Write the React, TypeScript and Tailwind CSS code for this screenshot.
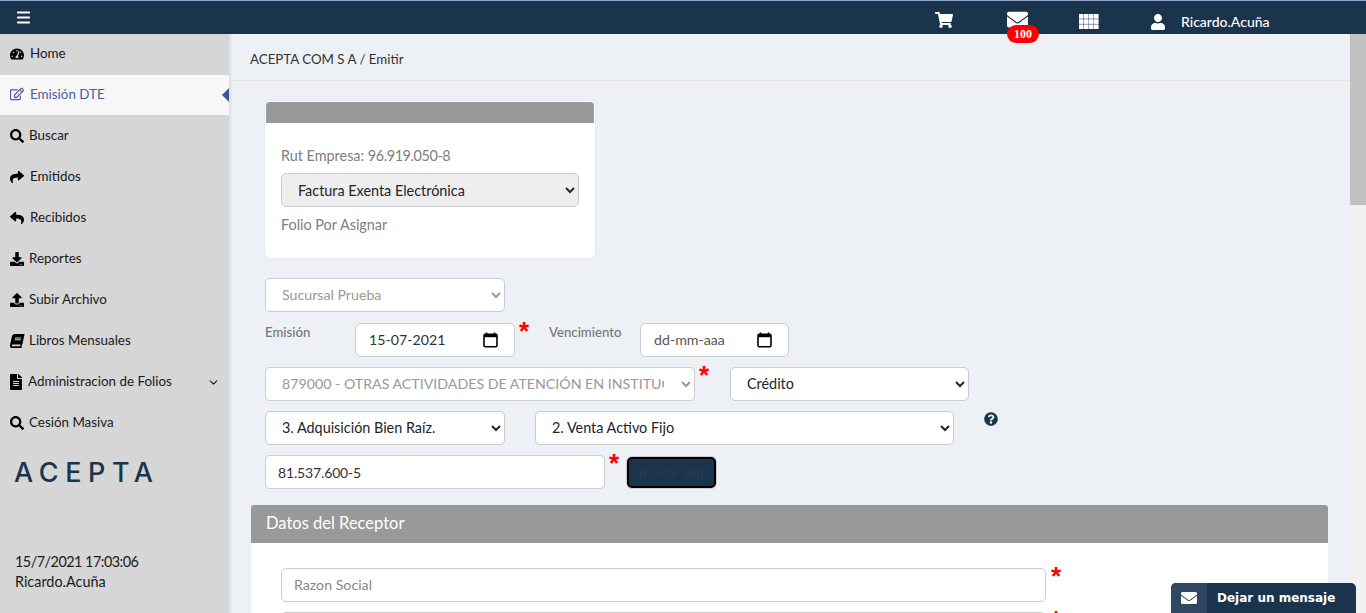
import React from 'react';
import {
    FaBook,
    FaDownload,
    FaEnvelope,
    FaFileAlt,
    FaQuestionCircle,
    FaRegEdit,
    FaReply,
    FaSearch,
    FaShare,
    FaShoppingCart,
    FaTachometerAlt,
    FaUpload,
    FaUser,
} from 'react-icons/fa';
import { ChevronDown, Menu } from 'lucide-react';

const navItems = [
    { label: 'Home', icon: FaTachometerAlt, gap: 'gap-[6px]', raised: true },
    { label: 'Emisión DTE', icon: FaRegEdit, gap: 'gap-[6px]', active: true, raised: true },
    { label: 'Buscar', icon: FaSearch, gap: 'gap-[5px]' },
    { label: 'Emitidos', icon: FaShare, gap: 'gap-[6px]' },
    { label: 'Recibidos', icon: FaReply, gap: 'gap-[6px]' },
    { label: 'Reportes', icon: FaDownload, gap: 'gap-[5px]' },
    { label: 'Subir Archivo', icon: FaUpload, gap: 'gap-[5px]' },
    { label: 'Libros Mensuales', icon: FaBook, gap: 'gap-[5px]', slanted: true },
    { label: 'Administracion de Folios', icon: FaFileAlt, gap: 'gap-[4px]', caret: true, large: true },
    { label: 'Cesión Masiva', icon: FaSearch, gap: 'gap-[5px]' },
];

const fieldBase = 'h-[34px] rounded-[5px] border border-[#ccc] bg-white text-[14.4px]';

const Star = () => (
    <span className="block h-[20px] w-[10px] font-['Liberation_Sans',sans-serif] text-[26px] leading-[16px] font-bold text-[#ff0000]">*</span>
);

const Calendar = () => (
    <svg width="15" height="16" viewBox="0 0 15 16" className="ml-auto">
        <path d="M3.5 0.5v2M11.5 0.5v2" stroke="#000" strokeWidth="1.6" />
        <rect x="1" y="2.2" width="13" height="12.6" rx="1.2" fill="none" stroke="#000" strokeWidth="1.6" />
        <rect x="1" y="2.2" width="13" height="3" fill="#000" />
    </svg>
);

// apps grid: four columns by three rows
const AppsGrid = () => (
    <svg width="20" height="15" viewBox="0 0 20 15" fill="#fff" className="ml-[51px] mt-[4px]">
        {[0, 5.2, 10.4].map((y) =>
            [0, 5, 10, 15].map((x) => <rect key={`${x}-${y}`} x={x} y={y} width="4.6" height="4.7" />),
        )}
    </svg>
);

const App: React.FC = () => {
    return (
        <div className="flex h-[613px] w-[1366px] flex-col overflow-hidden bg-[#edf0f5] font-['Lato',sans-serif] text-[14px] text-[#212529]">
            <header className="flex h-[34px] shrink-0 items-center border-t border-t-[#8ea2cc] bg-[#1b344d] pt-[4px] text-white">
                <Menu size={17} strokeWidth={2.6} className="ml-[15px] mb-[5px]" />
                <FaShoppingCart size={18} className="ml-[903px]" />
                <div className="relative ml-[54px]">
                    <FaEnvelope size={21} />
                    <span className="absolute top-[16px] left-0 flex h-[18px] w-[32px] items-center justify-center rounded-[9px] bg-[#ff0000] font-['Liberation_Serif',serif] text-[12px] font-bold">100</span>
                </div>
                <AppsGrid />
                <FaUser size={16} className="ml-[51px] mt-[4px]" />
                <span className="ml-[15px] mt-[3px] text-[14px] font-medium">Ricardo.Acuña</span>
            </header>

            <div className="flex min-h-0 flex-1">
                <aside className="z-10 flex w-[229px] shrink-0 flex-col bg-[#d6d6d6] shadow-[2px_0_2px_rgba(0,0,0,0.08)]">
                    <nav className="flex flex-col">
                        {navItems.map((item) => {
                            const Icon = item.icon;
                            return (
                                <div
                                    key={item.label}
                                    className={`relative flex items-center pl-[10px] ${item.gap} ${item.raised ? 'pb-[2px]' : ''} ${item.active ? 'h-[40px] bg-[#f7f7f7] text-[#4a5d9e]' : 'h-[41px] text-[#1a1a1a]'}`}
                                >
                                    <Icon
                                        size={item.large ? 16 : 14}
                                        className={`${item.active ? 'text-[#4a5d9e]' : 'text-black'} ${item.slanted ? '-skew-x-12' : ''} ${item.large ? '-ml-[2px]' : ''}`}
                                    />
                                    <span className="text-[13.4px]">{item.label}</span>
                                    {item.caret && <ChevronDown size={13} className="absolute right-[9px] top-[15px]" />}
                                    {item.active && (
                                        <span className="absolute top-[13px] right-0 h-0 w-0 border-y-[7px] border-r-[7px] border-y-transparent border-r-[#3d5a98]" />
                                    )}
                                </div>
                            );
                        })}
                    </nav>
                    <div className="mt-[13px] ml-[14px] font-['Inter',sans-serif] text-[27px] leading-[34px] font-medium tracking-[6.6px] text-[#1b344d]">ACEPTA</div>
                    <div className="mt-auto mb-[21px] ml-[15px] text-[14.4px] leading-[20px] text-[#1a1a1a]">
                        <div className="tracking-[-0.5px]">15/7/2021 17:03:06</div>
                        <div>Ricardo.Acuña</div>
                    </div>
                </aside>

                <main className="min-w-0 flex-1 overflow-hidden">
                    <div className="flex h-[47px] items-center border-b border-b-[#e6e6e6] pt-[6px] pl-[21px] text-[13.3px] text-[#333]">
                        ACEPTA COM S A / Emitir
                    </div>

                    <div className="pl-[22px]">
                        <div className="ml-[14px] mt-[20px] h-[157px] w-[330px] overflow-hidden rounded-[5px] border border-white bg-white shadow-[0_0_2px_rgba(0,0,0,0.1)]">
                            <div className="h-[21px] bg-[#999]" />
                            <div className="px-[15px] pt-[24px]">
                                <div className="text-[14.4px] leading-[18px] text-[#808080]">
                                    Rut Empresa: <span className="tracking-[-0.4px]">96.919.050-8</span>
                                </div>
                                <select className="mt-[8px] h-[34px] w-[298px] rounded-[5px] border border-[#ccc] bg-[#eee] pl-[12px] text-[14.4px] text-[#212529]">
                                    <option>Factura Exenta Electrónica</option>
                                </select>
                                <div className="mt-[9px] text-[14.4px] leading-[18px] text-[#808080]">Folio Por Asignar</div>
                            </div>
                        </div>

                        <div className="ml-[14px] mt-[20px] flex flex-col">
                            <select disabled className={`${fieldBase} w-[240px] pb-[2px] pl-[12px] !text-[14.2px] text-[#999] opacity-100`}>
                                <option>Sucursal Prueba</option>
                            </select>

                            <div className="mt-[11px] flex items-start">
                                <span className="w-[90px] text-[13.2px] font-medium text-[#777]">Emisión</span>
                                <div className={`${fieldBase} flex w-[160px] items-center pr-[16px] pl-[13px] text-[#333]`}>
                                    <span className="text-[14.2px]">15-07-2021</span>
                                    <Calendar />
                                </div>
                                <span className="ml-[4px]"><Star /></span>
                                <span className="ml-[20px] w-[91px] text-[13.2px] font-medium text-[#777]">Vencimiento</span>
                                <div className={`${fieldBase} flex w-[149px] items-center pr-[16px] pl-[13px] text-[#555]`}>
                                    <span className="text-[14.2px]">dd-mm-aaa</span>
                                    <Calendar />
                                </div>
                            </div>

                            <div className="mt-[10px] flex items-start">
                                <select disabled className={`${fieldBase} w-[430px] pr-[14px] pb-[2px] pl-[12px] !text-[14.2px] text-[#999] opacity-100`}>
                                    <option>879000 - OTRAS ACTIVIDADES DE ATENCIÓN EN INSTITUCIONES</option>
                                </select>
                                <span className="ml-[4px]"><Star /></span>
                                <select className={`${fieldBase} ml-[21px] w-[239px] pb-[2px] pl-[12px] text-[#212529]`}>
                                    <option>Crédito</option>
                                </select>
                            </div>

                            <div className="mt-[10px] flex items-start">
                                <select className={`${fieldBase} w-[240px] pb-[2px] pl-[12px] text-[#212529]`}>
                                    <option>3. Adquisición Bien Raíz.</option>
                                </select>
                                <select className={`${fieldBase} ml-[30px] w-[419px] pb-[2px] pl-[12px] text-[#212529]`}>
                                    <option>2. Venta Activo Fijo</option>
                                </select>
                                <FaQuestionCircle size={14} className="ml-[30px] mt-[1px] text-[#1b344d]" />
                            </div>

                            <div className="mt-[10px] flex items-start">
                                <div className={`${fieldBase} flex w-[340px] items-center pl-[12px] !text-[14px] tracking-[-0.15px] text-[#333]`}>81.537.600-5</div>
                                <span className="ml-[4px]"><Star /></span>
                                <button className="ml-[8px] mt-[2px] h-[31px] w-[89px] rounded-[5px] border-2 border-black bg-[#1b344d] text-[14px] text-[#2a3a4a] shadow-[0_0_0_1px_#ccc]">
                                    Buscar Rut
                                </button>
                            </div>
                        </div>

                        <section className="mt-[16px] mr-[22px] rounded-t-[3px] bg-white">
                            <div className="flex h-[38px] items-center rounded-t-[3px] bg-[#999] pb-[2px] pl-[15px] text-[16.5px] text-white">Datos del Receptor</div>
                            <div className="px-[30px] pt-[25px]">
                                <div className="flex items-start">
                                    <div className={`${fieldBase} flex w-[765px] items-center pl-[12px] !text-[14.2px] text-[#888]`}>Razon Social</div>
                                    <span className="ml-[5px]"><Star /></span>
                                </div>
                                <div className="mt-[10px] flex items-start">
                                    <div className={`${fieldBase} w-[765px]`} />
                                    <span className="ml-[5px]"><Star /></span>
                                </div>
                            </div>
                        </section>
                    </div>
                </main>

                <div className="w-[16px] shrink-0 bg-[#f1f1f1]">
                    <div className="h-[171px] bg-[#c1c1c1]" />
                </div>
            </div>

            <div className="absolute bottom-0 left-[1171px] flex h-[30px] w-[185px] overflow-hidden rounded-t-[5px] bg-[#1b344d] text-white">
                <div className="flex w-[36px] items-center justify-center bg-[#2f4763]">
                    <FaEnvelope size={16} />
                </div>
                <span className="ml-[10px] flex items-center font-['DejaVu_Sans',sans-serif] text-[12px] font-bold">Dejar un mensaje</span>
            </div>
        </div>
    );
};

export default App;
